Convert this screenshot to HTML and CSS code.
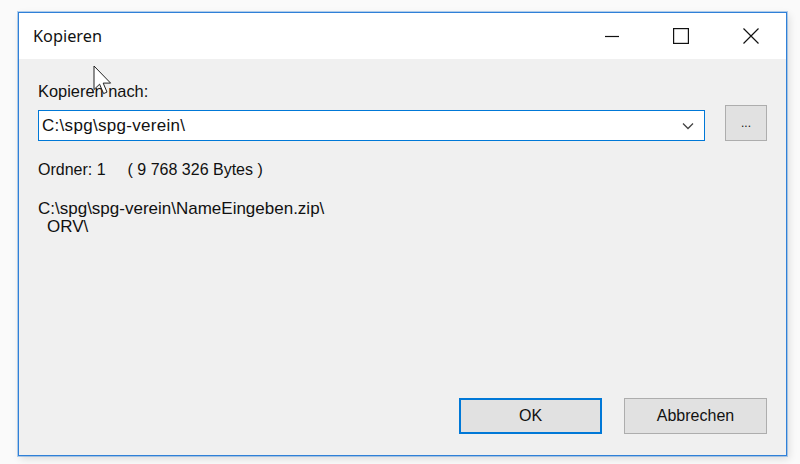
FILE: index.html
```html
<!DOCTYPE html>
<html lang="de">
<head>
<meta charset="utf-8">
<title>Kopieren</title>
<link rel="stylesheet" href="styles.css">
</head>
<body>
<div class="window">
  <div class="titlebar">
    <span class="title">Kopieren</span>
    <div class="caption-btns">
      <span class="cbtn min"><svg width="16" height="16" viewBox="0 0 16 16"><path d="M1 8.5H15" stroke="#111" stroke-width="1.2"/></svg></span>
      <span class="cbtn max"><svg width="16" height="16" viewBox="0 0 16 16"><rect x="0.6" y="0.6" width="14.8" height="14.8" fill="none" stroke="#111" stroke-width="1.2"/></svg></span>
      <span class="cbtn close"><svg width="16" height="16" viewBox="0 0 16 16"><path d="M0.5 0.5L15.5 15.5M15.5 0.5L0.5 15.5" stroke="#111" stroke-width="1.2"/></svg></span>
    </div>
  </div>
  <div class="content">
    <div class="label">Kopieren nach:</div>
    <div class="dest-row">
      <div class="combo">
        <span class="combo-text">C:\spg\spg-verein\</span>
        <svg class="chev" width="12" height="8" viewBox="0 0 12 8"><path d="M1 1.5L6 6.5L11 1.5" fill="none" stroke="#444" stroke-width="1.3"/></svg>
      </div>
      <button class="btn browse">...</button>
    </div>
    <div class="info">Ordner: 1<span class="bytes">( 9 768 326 Bytes )</span></div>
    <div class="paths">
      <div>C:\spg\spg-verein\NameEingeben.zip\</div>
      <div class="indent">ORV\</div>
    </div>
    <div class="actions">
      <button class="btn default">OK</button>
      <button class="btn">Abbrechen</button>
    </div>
  </div>
  <svg class="cursor" width="22" height="32" viewBox="0 0 22 32"><path d="M1 1V24.5L6.6 19.2L10.6 28.6L14 27.1L10.2 18.1H17.6Z" fill="#fff" stroke="#222" stroke-width="1" stroke-linejoin="round"/></svg>
</div>
</body>
</html>
```
FILE: styles.css
```css
html, body {
  margin: 0;
  padding: 0;
}
body {
  background: #fafafa;
  width: 800px;
  height: 464px;
  overflow: hidden;
  padding: 12px 0 0 18px;
  box-sizing: border-box;
  font-family: "Liberation Sans", Arial, sans-serif;
  color: #111;
}
.window {
  position: relative;
  width: 769px;
  height: 444px;
  box-sizing: border-box;
  border: 1px solid #2f80d8;
  box-shadow: 0 0 0 1px rgba(47,128,216,0.35), 2px 3px 8px rgba(0,0,0,0.12);
  display: flex;
  flex-direction: column;
  background: #f0f0f0;
}
.titlebar {
  height: 46px;
  background: #fff;
  display: flex;
  align-items: center;
  padding-left: 14px;
  flex-shrink: 0;
}
.title {
  font-family: "Noto Sans", "Liberation Sans", sans-serif;
  font-size: 16.3px;
  color: #111;
  flex: 1;
  margin-top: -1px;
}
.caption-btns {
  display: flex;
  align-items: center;
  height: 100%;
}
.cbtn {
  display: flex;
  justify-content: center;
  align-items: center;
}
.cbtn.min { width: 68px; }
.cbtn.max { width: 70px; }
.cbtn.close { width: 70px; }
.content {
  flex: 1;
  display: flex;
  flex-direction: column;
  padding: 22px 19px 21px 19px;
  font-size: 17px;
}
.label {
  line-height: 20px;
  font-size: 16.4px;
}
.dest-row {
  display: flex;
  align-items: flex-end;
  margin-top: 4px;
  gap: 20px;
}
.combo {
  flex: 1;
  height: 31px;
  box-sizing: border-box;
  border: 1px solid #0078d7;
  background: #fff;
  display: flex;
  align-items: center;
  padding: 0 10px 0 3px;
}
.combo-text {
  flex: 1;
  font-size: 17px;
  letter-spacing: 0.3px;
  color: #111;
}
.chev {
  display: block;
}
.btn {
  font-family: "Liberation Sans", Arial, sans-serif;
  color: #111;
  background: #e1e1e1;
  border: 1px solid #adadad;
  box-sizing: border-box;
  padding: 0;
}
.browse {
  width: 42px;
  height: 36px;
  font-size: 12px;
}
.info {
  margin-top: 19px;
  line-height: 20px;
  font-size: 16px;
}
.bytes {
  margin-left: 22px;
}
.paths {
  margin-top: 20px;
  line-height: 18px;
}
.indent {
  padding-left: 9px;
}
.actions {
  margin-top: auto;
  display: flex;
  justify-content: flex-end;
  gap: 22px;
}
.actions .btn {
  width: 143px;
  height: 36px;
  font-size: 16px;
}
.actions .default {
  border: 2px solid #0078d7;
}
.cursor {
  position: absolute;
  left: 74px;
  top: 52px;
}
```
